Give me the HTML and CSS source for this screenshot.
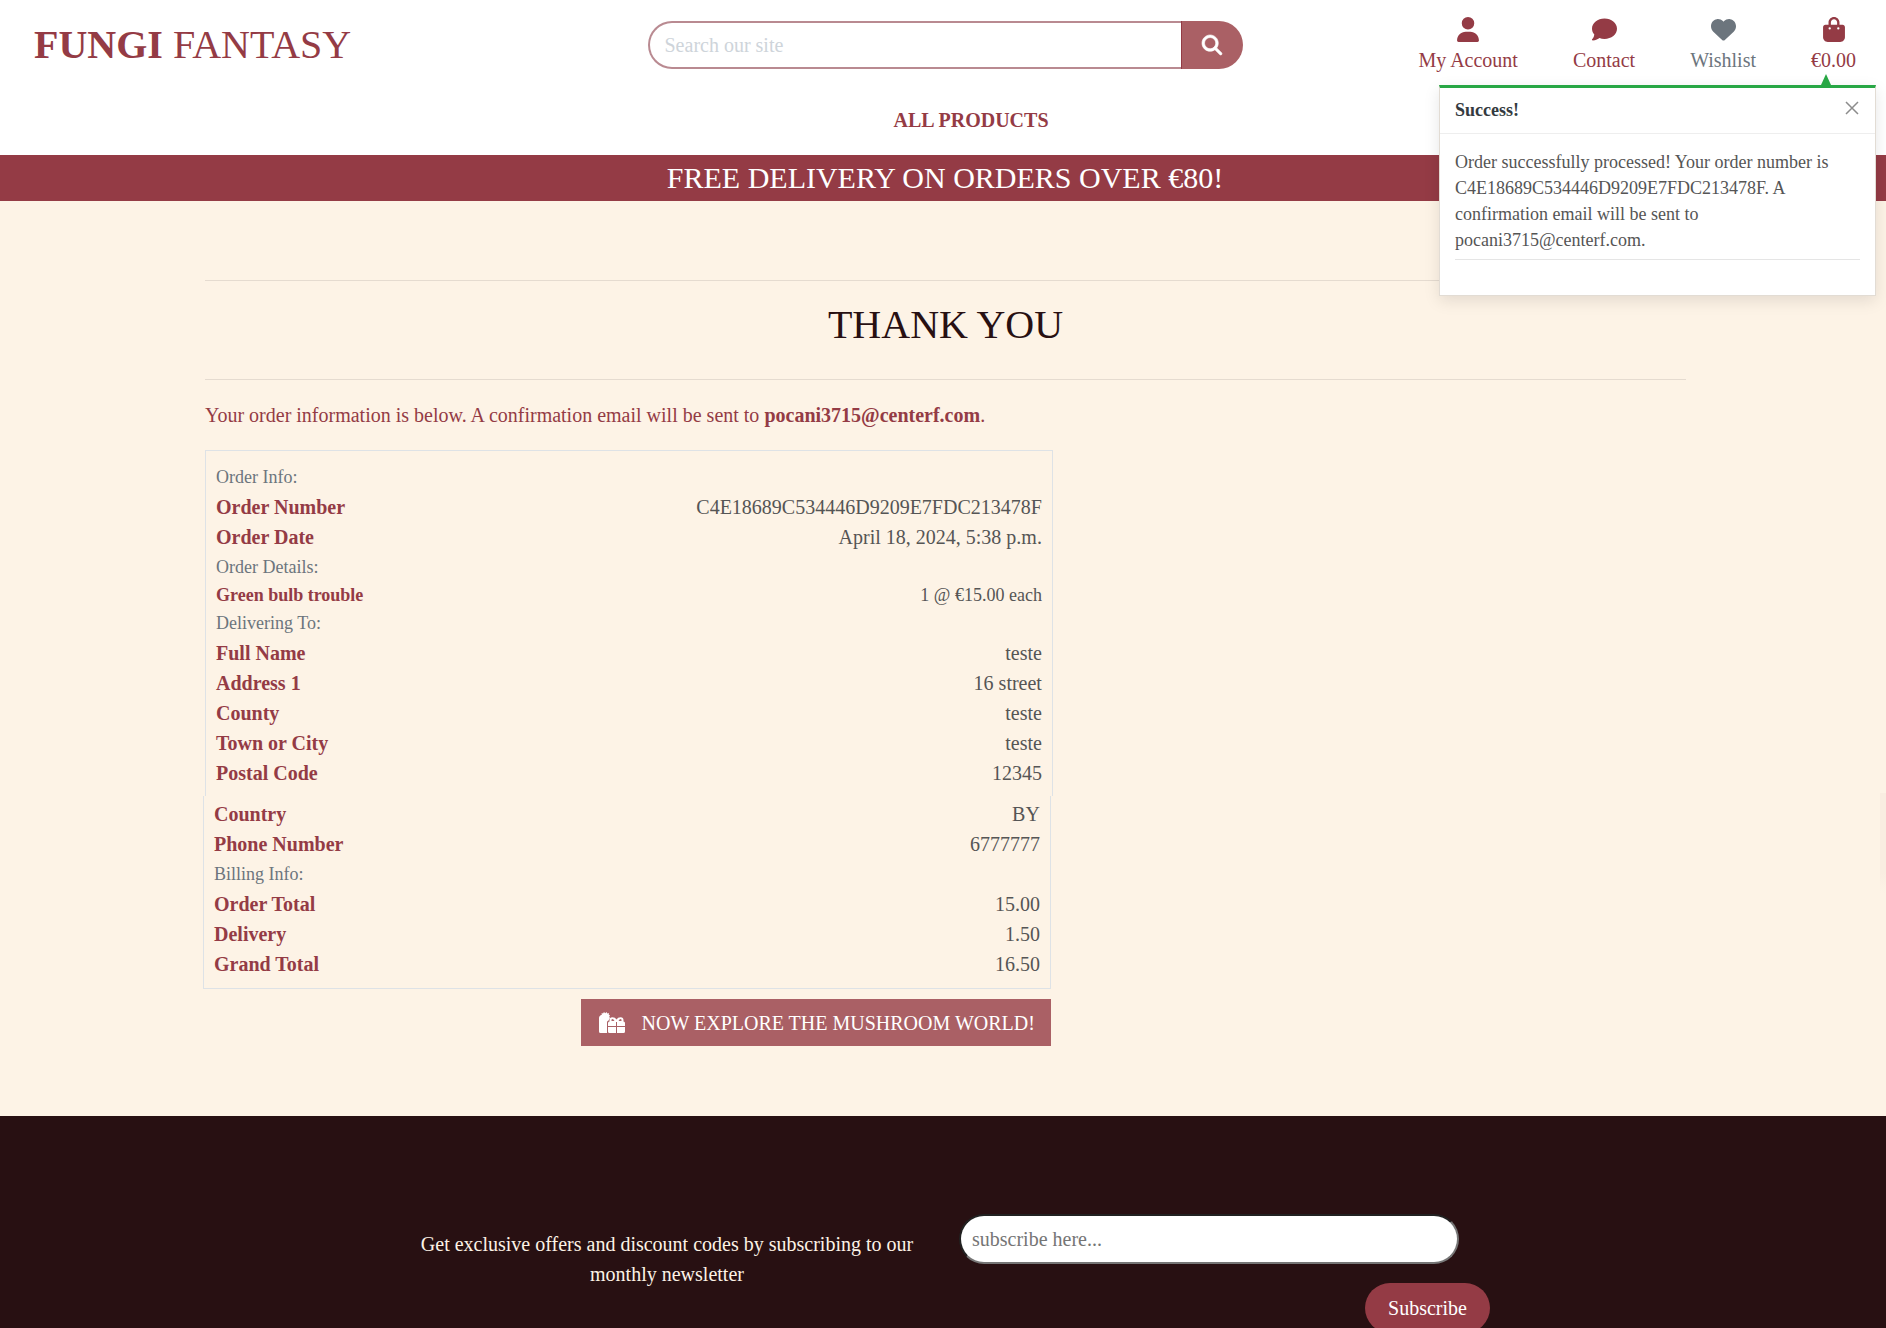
FILE: index.html
```html
<!DOCTYPE html>
<html lang="en">
<head>
<meta charset="utf-8">
<meta name="viewport" content="width=device-width, initial-scale=1">
<title>Fungi Fantasy</title>
<link rel="stylesheet" href="styles.css">
</head>
<body>
<header class="site-header">
  <div class="top-row">
    <a class="logo" href="#"><strong>FUNGI</strong> FANTASY</a>
    <form class="search" role="search">
      <input class="search-input" type="text" placeholder="Search our site" aria-label="Search our site">
      <button class="search-button" type="button" aria-label="Search">
        <svg viewBox="0 0 512 512" width="20" height="20" fill="currentColor" stroke="currentColor" stroke-width="16"><path d="M416 208c0 45.9-14.9 88.3-40 122.7L502.6 457.4c12.5 12.5 12.5 32.8 0 45.3s-32.8 12.5-45.3 0L330.7 376c-34.4 25.2-76.8 40-122.7 40C93.1 416 0 322.9 0 208S93.1 0 208 0S416 93.1 416 208zM208 352a144 144 0 1 0 0-288 144 144 0 1 0 0 288z"/></svg>
      </button>
    </form>
    <nav class="account-links" aria-label="Account">
      <a href="#"><svg viewBox="0 0 448 512" width="22" height="25" fill="currentColor"><path d="M224 256A128 128 0 1 0 224 0a128 128 0 1 0 0 256zm-45.7 48C79.8 304 0 383.8 0 482.3C0 498.7 13.3 512 29.7 512H418.3c16.4 0 29.7-13.3 29.7-29.7C448 383.8 368.2 304 269.7 304H178.3z"/></svg>My Account</a>
      <a href="#"><svg viewBox="0 0 512 512" width="25" height="25" fill="currentColor"><path d="M512 240c0 114.9-114.6 208-256 208c-37.1 0-72.3-6.4-104.1-17.9c-11.9 8.7-31.3 20.6-54.3 30.6C73.6 471.1 44.7 480 16 480c-6.5 0-12.3-3.9-14.8-9.9c-2.5-6-1.1-12.8 3.4-17.4l.3-.3c.3-.3 .7-.7 1.3-1.4c1.1-1.2 2.8-3.1 4.9-5.7c4.1-5 9.6-12.4 15.2-21.6c10-16.6 19.5-38.4 21.4-62.9C17.7 326.8 0 285.1 0 240C0 125.1 114.6 32 256 32s256 93.1 256 208z"/></svg>Contact</a>
      <a class="muted" href="#"><svg viewBox="0 0 512 512" width="25" height="25" fill="currentColor"><path d="M47.6 300.4L228.3 469.1c7.5 7 17.4 10.9 27.7 10.9s20.2-3.9 27.7-10.9L464.4 300.4c30.4-28.3 47.6-68 47.6-109.5v-5.8c0-69.9-50.5-129.5-119.4-141C347 36.5 300.6 51.4 268 84L256 96 244 84c-32.6-32.6-79-47.5-124.6-39.9C50.5 55.6 0 115.2 0 185.1v5.8c0 41.5 17.2 81.2 47.6 109.5z"/></svg>Wishlist</a>
      <a href="#"><svg viewBox="0 0 448 512" width="22" height="25" fill="currentColor"><path d="M160 112c0-35.3 28.7-64 64-64s64 28.7 64 64v48H160V112zm-48 48H48c-26.5 0-48 21.5-48 48V416c0 53 43 96 96 96H352c53 0 96-43 96-96V208c0-26.5-21.5-48-48-48H336V112C336 50.1 285.9 0 224 0S112 50.1 112 112v48zm24 48a24 24 0 1 1 0 48 24 24 0 1 1 0-48zm152 24a24 24 0 1 1 48 0 24 24 0 1 1 -48 0z"/></svg>€0.00</a>
    </nav>
  </div>
  <nav class="main-nav" aria-label="Main"><a href="#">ALL PRODUCTS</a></nav>
  <aside class="toast" role="status">
    <div class="toast-header">
      <strong>Success!</strong>
      <button class="toast-close" type="button" aria-label="Close">
        <svg viewBox="0 0 14 14" width="14" height="14" fill="none" stroke="currentColor" stroke-width="1.500"><path d="M1 1l12 12M13 1L1 13"/></svg>
      </button>
    </div>
    <div class="toast-body">
      <p>Order successfully processed! Your order number is C4E18689C534446D9209E7FDC213478F. A confirmation email will be sent to pocani3715@centerf.com.</p>
      <hr>
    </div>
  </aside>
</header>
<div class="banner">FREE DELIVERY ON ORDERS OVER €80!</div>

<main class="content">
  <hr>
  <h1>THANK YOU</h1>
  <hr>
  <p class="intro">Your order information is below. A confirmation email will be sent to <strong>pocani3715@centerf.com</strong>.</p>
  <div class="order">
    <div class="order-box order-box-top">
      <table>
        <tbody>
          <tr class="group"><th colspan="2">Order Info:</th></tr>
          <tr><th scope="row">Order Number</th><td>C4E18689C534446D9209E7FDC213478F</td></tr>
          <tr><th scope="row">Order Date</th><td>April 18, 2024, 5:38 p.m.</td></tr>
          <tr class="group"><th colspan="2">Order Details:</th></tr>
          <tr class="item"><th scope="row">Green bulb trouble</th><td>1 @ €15.00 each</td></tr>
          <tr class="group"><th colspan="2">Delivering To:</th></tr>
          <tr><th scope="row">Full Name</th><td>teste</td></tr>
          <tr><th scope="row">Address 1</th><td>16 street</td></tr>
          <tr><th scope="row">County</th><td>teste</td></tr>
          <tr><th scope="row">Town or City</th><td>teste</td></tr>
          <tr><th scope="row">Postal Code</th><td>12345</td></tr>
        </tbody>
      </table>
    </div>
    <div class="order-end">
      <div class="order-box order-box-bottom">
        <table>
          <tbody>
            <tr><th scope="row">Country</th><td>BY</td></tr>
            <tr><th scope="row">Phone Number</th><td>6777777</td></tr>
            <tr class="group"><th colspan="2">Billing Info:</th></tr>
            <tr><th scope="row">Order Total</th><td>15.00</td></tr>
            <tr><th scope="row">Delivery</th><td>1.50</td></tr>
            <tr><th scope="row">Grand Total</th><td>16.50</td></tr>
          </tbody>
        </table>
      </div>
      <a class="explore" href="#">
        <svg viewBox="0 0 26 21" width="26" height="21" fill="currentColor"><path d="M2 3l1-.5L2.500 1 4 1.500 5 0l1.200 1.200L7.500 0l.8 1.500L10 1l-.3 1.600 1.300.8-.8 1.300L11 6 9.500 8.500C8.500 9 8 9.500 8 10.500V21H1.500Q0 21 0 19.500V6Q0 4 2 3z"/><path fill-rule="evenodd" d="M9 14V11Q9 9.500 10.500 9.500 10 5.200 13.500 5.200 16.200 5.200 17.500 7.500 18.800 5.200 21.500 5.200 25 5.200 24.500 9.500 26 9.500 26 11V14H18V10H17V14zM12.500 7.500V9h3l-1.500-2zM22.500 7.500L21 7l-1.500 2h3z"/><path d="M9 15h8v6h-6.500Q9 21 9 19.500zM18 15h8v4.500Q26 21 24.500 21H18z"/></svg>
        NOW EXPLORE THE MUSHROOM WORLD!
      </a>
    </div>
  </div>
</main>

<footer class="site-footer">
  <div class="newsletter">
    <p>Get exclusive offers and discount codes by subscribing to our monthly newsletter</p>
    <form class="subscribe">
      <input type="email" placeholder="subscribe here..." aria-label="Email address">
      <button type="button">Subscribe</button>
    </form>
  </div>
</footer>
</body>
</html>
```
FILE: styles.css
```css
:root {
  --brand: #943b45;
  --brand-soft: #aa6065;
  --dark: #281012;
  --cream: #fdf3e6;
  --grey: #6c757d;
  --text: #555;
}

* {
  box-sizing: border-box;
}

body {
  height: 100vh;
  margin: 0;
  overflow-x: hidden;
  overflow-y: auto;
  scrollbar-width: none;
  background: var(--cream);
  color: var(--text);
  font-family: "Liberation Serif", "Times New Roman", serif;
  font-size: 20px;
  line-height: 30px;
}

a {
  color: var(--brand);
  text-decoration: none;
}

p,
h1 {
  margin: 0;
}

svg {
  display: block;
}

input,
button {
  font: inherit;
}

button {
  cursor: pointer;
}

hr {
  height: 1px;
  margin: 0;
  border: 0;
  background: #e5dbd0;
}

/* Header */
.site-header {
  position: relative;
  padding: 15px 30px 20px 34px;
  background: #fff;
}

.top-row {
  display: grid;
  grid-template-columns: 1fr minmax(0, 595px) 1fr;
  align-items: center;
}

.logo {
  font-size: 40px;
  line-height: 48px;
}

.search {
  display: flex;
  height: 48px;
}

.search-input {
  flex: 1;
  min-width: 0;
  padding: 0 15px;
  border: 2px solid #b98a91;
  border-right-width: 0;
  border-radius: 24px 0 0 24px;
  background: #fff;
  color: var(--text);
}

.search-input::placeholder {
  color: #ced4da;
  opacity: 1;
}

.search-button {
  display: grid;
  place-items: center;
  width: 62px;
  padding: 0 8px;
  border: 0;
  border-left: 1px solid var(--brand);
  border-radius: 0 24px 24px 0;
  background: var(--brand-soft);
  color: #fff;
}

.search-button svg {
  overflow: visible;
}

.account-links {
  display: flex;
  justify-content: flex-end;
  gap: 55px;
  padding-top: 2px;
}

.account-links a {
  display: flex;
  flex-direction: column;
  align-items: center;
  gap: 3px;
}

.account-links .muted {
  color: var(--grey);
}

.main-nav {
  padding: 30px 0 0 52px;
  text-align: center;
  font-weight: bold;
}

.banner {
  padding-left: 4px;
  background: var(--brand);
  color: #fff;
  font-size: 30px;
  line-height: 46px;
  text-align: center;
}

/* Notification */
.toast {
  position: absolute;
  z-index: 1;
  top: 85px;
  right: 10px;
  width: 437px;
  border: 1px solid #e2dcd4;
  border-top: 3px solid #28a745;
  background: #fff;
  box-shadow: 0 5px 15px rgba(0, 0, 0, 0.1);
  font-size: 18px;
  line-height: 26px;
}

.toast::before {
  content: "";
  position: absolute;
  right: 44px;
  bottom: 100%;
  margin-bottom: 3px;
  border: 5px solid transparent;
  border-top: 0;
  border-bottom: 11px solid #28a745;
}

.toast-header {
  display: flex;
  justify-content: space-between;
  padding: 9px 16px 10px 15px;
  border-bottom: 1px solid #eee;
  color: #343a40;
}

.toast-close {
  align-self: flex-start;
  margin-top: 4px;
  padding: 0;
  border: 0;
  background: none;
  color: #8c8c8c;
}

.toast-body {
  padding: 15px 15px 35px;
}

.toast-body hr {
  margin-top: 6px;
  background: #e5e5e5;
}

/* Order confirmation */
.content {
  position: relative;
  padding: 79px 200px 70px 205px;
}

.content::after {
  content: "";
  position: absolute;
  top: 592px;
  right: 0;
  width: 6px;
  height: 100px;
  background: linear-gradient(#f9ede1 80%, transparent);
}

.content h1 {
  margin: 20px 0 30px;
  color: var(--dark);
  font-size: 40px;
  font-weight: normal;
  line-height: 48px;
  text-align: center;
}

.intro {
  margin: 20px 0;
  color: var(--brand);
}

.order {
  width: 58.3333%;
  padding-right: 16px;
}

.order-end {
  margin: 0 2px 0 -2px;
}

.order-box {
  border: 1px solid #dee2e6;
}

.order-box-top {
  padding: 11px 10px 8px;
  border-bottom: 0;
}

.order-box-bottom {
  padding: 3px 10px 9px;
  border-top: 0;
}

.order-box table {
  width: 100%;
  border-collapse: collapse;
}

.order-box th,
.order-box td {
  padding: 0;
  text-align: left;
}

.order-box th {
  color: var(--brand);
}

.order-box td {
  text-align: right;
}

.order-box .group th {
  color: var(--grey);
  font-size: 18px;
  font-weight: normal;
}

.order-box .item {
  font-size: 18px;
  line-height: 26px;
}

.explore {
  display: flex;
  align-items: center;
  gap: 17px;
  width: fit-content;
  min-height: 47px;
  margin: 10px 0 0 auto;
  padding: 8px 16px 8px 18px;
  background: var(--brand-soft);
  color: #fff;
}

/* Footer */
.site-footer {
  padding-top: 98px;
  background: var(--dark);
  color: var(--cream);
}

.newsletter {
  display: grid;
  grid-template-columns: 542fr 531fr;
  gap: 21px;
  max-width: 1094px;
  margin: 0 auto;
}

.newsletter p {
  padding-top: 15px;
  text-align: center;
}

.subscribe {
  display: flex;
  flex-direction: column;
  gap: 19px;
}

.subscribe input {
  height: 50px;
  margin-right: 31px;
  padding: 0 11px;
  border: 2px solid #767676;
  border-top-color: #212121;
  border-left-color: #212121;
  border-radius: 25px;
  background: #fff;
}

.subscribe input::placeholder {
  color: #757575;
  opacity: 1;
}

.subscribe button {
  align-self: flex-end;
  width: 125px;
  height: 50px;
  padding: 0;
  border: 0;
  border-radius: 25px;
  background: var(--brand);
  color: #fff;
}
```
